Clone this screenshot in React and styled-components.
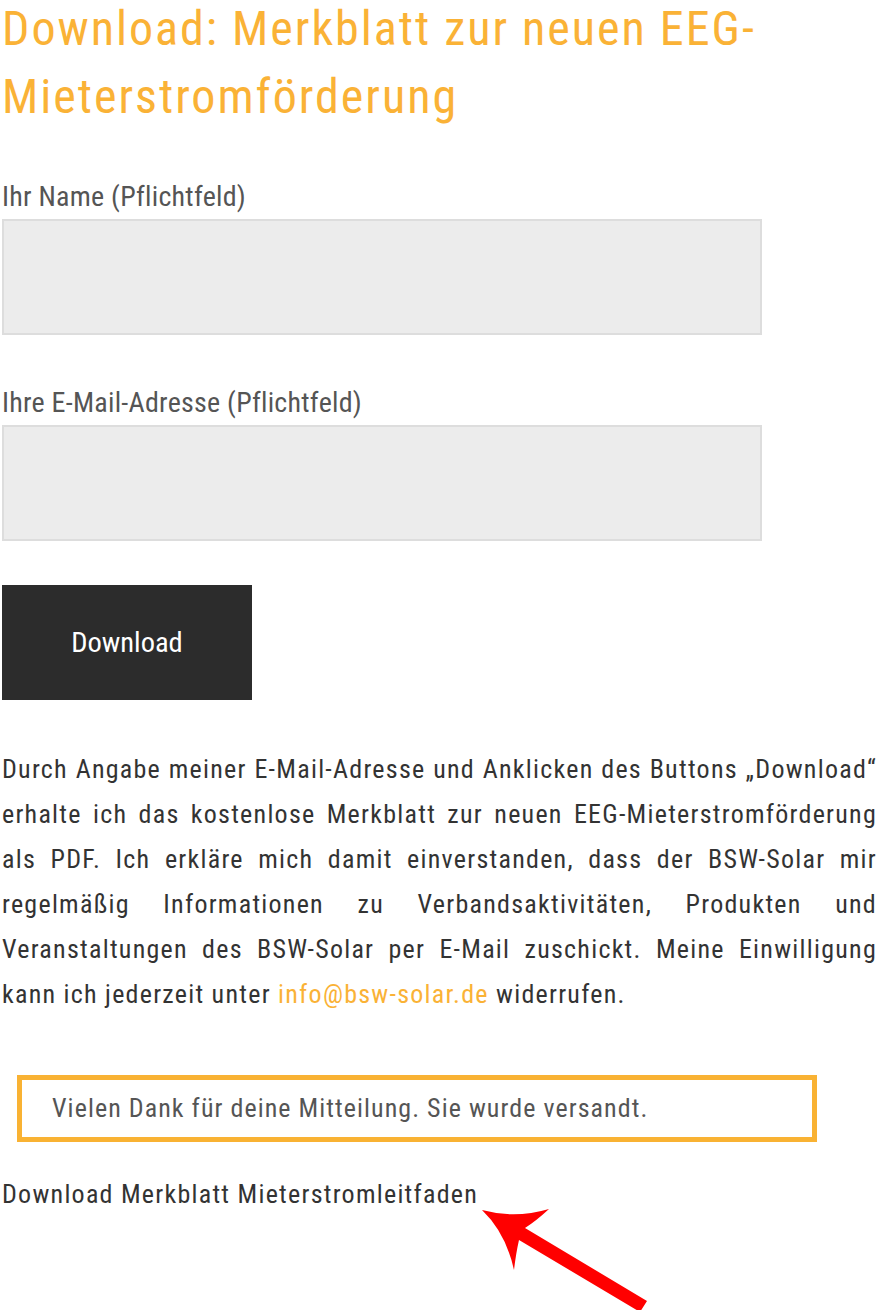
import React from "react";
import styled, { createGlobalStyle } from "styled-components";

const GlobalStyle = createGlobalStyle`
  html, body { margin: 0; padding: 0; background: #ffffff; }
  body {
    font-family: "Roboto Condensed", "Liberation Sans", sans-serif;
    font-weight: 400;
    color: #333333;
  }
  * { box-sizing: border-box; }
`;

const ORANGE = "#fab236";

const Page = styled.div`
  position: relative;
  width: 878px;
  height: 1310px;
  overflow: hidden;
  padding-left: 2px;
`;

const Title = styled.h1`
  margin: 0;
  display: flex;
  flex-direction: column;
  gap: 11px;
  font-size: 48px;
  line-height: 57px;
  font-weight: 400;
  letter-spacing: 2px;
  color: ${ORANGE};
`;

const TitleLine = styled.span`
  display: block;
  white-space: nowrap;
`;

const Form = styled.form`
  display: flex;
  flex-direction: column;
  align-items: flex-start;
  margin-top: 55px;
`;

const Field = styled.div`
  display: flex;
  flex-direction: column;
  gap: 5px;
  margin-bottom: 51px;
`;

const Label = styled.label`
  font-size: 28px;
  line-height: 34px;
  letter-spacing: 0.25px;
  color: #555555;
`;

const Input = styled.input`
  width: 760px;
  height: 116px;
  border: 2px solid #dddddd;
  background: #ececec;
  font: inherit;
  font-size: 24px;
  padding: 0 16px;
  outline: none;
`;

const Button = styled.button`
  margin-top: -7px;
  width: 250px;
  height: 115px;
  border: none;
  background: #2c2c2c;
  color: #ffffff;
  font-family: inherit;
  font-weight: 400;
  font-size: 28.5px;
  letter-spacing: 0px;
  cursor: pointer;
`;

const Consent = styled.div`
  margin-top: 47px;
  width: 875px;
  font-size: 26px;
  line-height: 45px;
  letter-spacing: 1.25px;
  color: #333333;
`;

const Line = styled.div`
  text-align: justify;
  text-align-last: ${(p) => (p.$last ? "left" : "justify")};
`;

const Mail = styled.a`
  color: ${ORANGE};
  text-decoration: none;
`;

const Success = styled.div`
  margin: 58px 0 0 15px;
  width: 800px;
  height: 67px;
  border: 5px solid #f9b233;
  display: flex;
  align-items: center;
  padding: 0 0 1px 30px;
  font-size: 26px;
  letter-spacing: 1.05px;
  color: #555555;
`;

const DownloadLink = styled.div`
  margin-top: 30px;
  font-size: 26px;
  line-height: 45px;
  letter-spacing: 1.25px;
  color: #333333;
`;

const ArrowSvg = styled.svg`
  position: absolute;
  left: 470px;
  top: 1195px;
  width: 190px;
  height: 115px;
  overflow: visible;
`;

const lines = [
  "Durch Angabe meiner E-Mail-Adresse und Anklicken des Buttons \u201EDownload\u201C",
  "erhalte ich das kostenlose Merkblatt zur neuen EEG-Mieterstromförderung",
  "als PDF. Ich erkläre mich damit einverstanden, dass der BSW-Solar mir",
  "regelmäßig Informationen zu Verbandsaktivitäten, Produkten und",
  "Veranstaltungen des BSW-Solar per E-Mail zuschickt. Meine Einwilligung",
];

export default function App() {
  return (
    <>
      <GlobalStyle />
      <Page>
        <Title>
          <TitleLine>Download: Merkblatt zur neuen EEG-</TitleLine>
          <TitleLine>Mieterstromförderung</TitleLine>
        </Title>
        <Form onSubmit={(e) => e.preventDefault()}>
          <Field>
            <Label htmlFor="name">Ihr Name (Pflichtfeld)</Label>
            <Input id="name" type="text" />
          </Field>
          <Field>
            <Label htmlFor="mail">Ihre E-Mail-Adresse (Pflichtfeld)</Label>
            <Input id="mail" type="email" />
          </Field>
          <Button type="submit">Download</Button>
        </Form>
        <Consent>
          {lines.map((l) => (
            <Line key={l}>{l}</Line>
          ))}
          <Line $last>
            kann ich jederzeit unter <Mail href="#">info@bsw-solar.de</Mail> widerrufen.
          </Line>
        </Consent>
        <Success>Vielen Dank für deine Mitteilung. Sie wurde versandt.</Success>
        <DownloadLink>Download Merkblatt Mieterstromleitfaden</DownloadLink>
        <ArrowSvg viewBox="0 0 190 115">
          <path
            d="M12 15 Q45 24 79 14 Q66 26 55 33 L177 106 L170 117 L49 45 Q46 58 44 75 Q36 38 12 15 Z"
            fill="#ff0000"
          />
        </ArrowSvg>
      </Page>
    </>
  );
}
